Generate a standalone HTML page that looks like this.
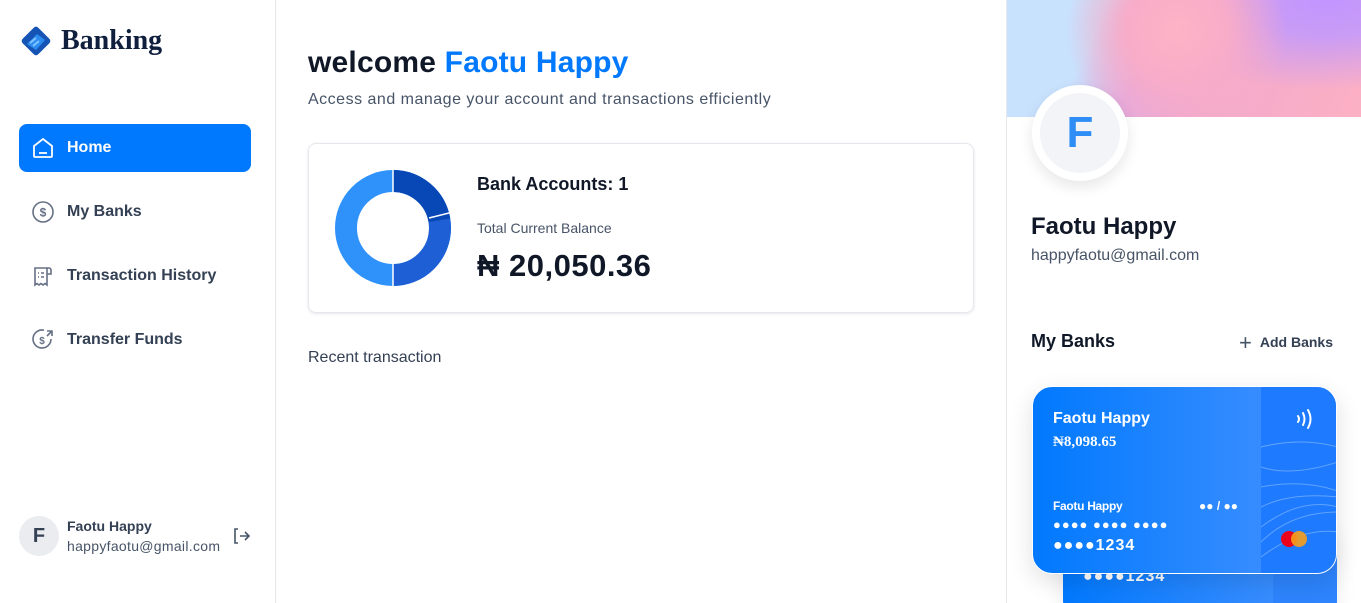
<!DOCTYPE html>
<html><head><style>
*{box-sizing:border-box;margin:0;padding:0}
html,body{width:1361px;height:603px;overflow:hidden}
body{font-family:"Liberation Sans",sans-serif;background:#fff;position:relative;color:#101828}
.side{position:absolute;left:0;top:0;width:276px;height:603px;border-right:1px solid #e5e7eb}
.logo{position:absolute;left:19px;top:24px;display:flex;align-items:center}
.logo span{font-family:"Liberation Serif",serif;font-weight:bold;font-size:28px;color:#0f1f3d;margin-left:8px}
.nav{position:absolute;left:19px;width:232px;height:48px;border-radius:8px;display:flex;align-items:center;padding-left:12px;font-weight:bold;font-size:16px;color:#344054}
.nav svg{margin-right:12px}
.nav.act{background:#0179fe;color:#fff}
.main{position:absolute;left:276px;top:0;width:730px;height:603px}
.right{position:absolute;left:1006px;top:0;width:355px;height:603px;border-left:1px solid #e5e7eb;overflow:hidden}
.card{position:absolute;border-radius:20px;overflow:hidden;background:linear-gradient(90deg,#0179fe,#4893ff);color:#fff}
</style></head><body>
<div class="side">
 <div class="logo"><svg width="34" height="34" viewBox="0 0 34 34"><rect x="6" y="6" width="22" height="22" transform="rotate(45 17 17)" rx="3" fill="#1553b5"/><path d="M8 20 L18 10 L26 16 L17 26Z" fill="#2c8cf0"/><path d="M11 19l6-5M14 22l6-5" stroke="#7fc4ff" stroke-width="2"/></svg><span>Banking</span></div>
 <div class="nav act" style="top:124px"><svg width="24" height="24" viewBox="0 0 24 24" fill="none" stroke="#fff" stroke-width="1.8"><path d="M3 10 L12 3 L21 10 V20 a1 1 0 0 1-1 1 H4 a1 1 0 0 1-1-1Z"/><path d="M8 17h8"/></svg>Home</div>
 <div class="nav" style="top:188px"><svg width="24" height="24" viewBox="0 0 24 24" fill="none" stroke="#667085" stroke-width="1.6"><circle cx="12" cy="12" r="10"/><text x="12" y="16.5" font-size="12" text-anchor="middle" fill="#667085" stroke="none" font-family="Liberation Sans">$</text></svg>My Banks</div>
 <div class="nav" style="top:252px"><svg width="24" height="24" viewBox="0 0 24 24" fill="none" stroke="#667085" stroke-width="1.6"><path d="M16 4H4v17l2-1.5 2 1.5 2-1.5 2 1.5 2-1.5 2 1.5V4"/><path d="M16 4h2a2 2 0 0 1 2 2v4h-4"/><path d="M7 9h1M10 9h3M7 13h1M10 13h3"/></svg>Transaction History</div>
 <div class="nav" style="top:316px"><svg width="24" height="24" viewBox="0 0 24 24" fill="none" stroke="#667085" stroke-width="1.6"><path d="M20 11a9 9 0 1 1-7-8.8"/><path d="M16 3h5v5M21 3l-5 5"/><text x="11" y="16" font-size="10" text-anchor="middle" fill="#667085" stroke="none" font-family="Liberation Sans" font-weight="bold">$</text></svg>Transfer Funds</div>
 <div style="position:absolute;left:19px;top:516px;width:40px;height:40px;border-radius:50%;background:#eaecf0;color:#344054;font-weight:bold;font-size:20px;display:flex;align-items:center;justify-content:center">F</div>
 <div style="position:absolute;left:67px;top:518px;font-size:14px;font-weight:bold;color:#344054">Faotu Happy</div>
 <div style="position:absolute;left:67px;top:538px;font-size:14px;color:#475467;letter-spacing:.3px">happyfaotu@gmail.com</div>
 <svg style="position:absolute;left:231px;top:526px" width="20" height="20" viewBox="0 0 20 20" fill="none" stroke="#475467" stroke-width="1.6"><path d="M7 3H4v14h3M9 10h9M14 6l4 4-4 4"/></svg>
</div>
<div class="main">
 <div style="position:absolute;left:32px;top:46px;font-size:30px;font-weight:600;color:#101828;letter-spacing:.2px">welcome <span style="color:#0179fe">Faotu Happy</span></div>
 <div style="position:absolute;left:32px;top:91px;font-size:16px;color:#475467;letter-spacing:.5px">Access and manage your account and transactions efficiently</div>
 <div style="position:absolute;left:32px;top:143px;width:666px;height:170px;border:1px solid #e4e7ec;border-radius:8px;box-shadow:0 1px 3px rgba(16,24,40,.1)">
  <svg style="position:absolute;left:25px;top:25px" width="118" height="118" viewBox="-59 -59 118 118">
   <g fill="none" stroke-width="22">
   <circle r="47" stroke="#2f91fa"/>
   <circle r="47" stroke="#1e5fd6" stroke-dasharray="147 400" transform="rotate(-90)"/>
   <circle r="47" stroke="#0747b6" stroke-dasharray="66 400" transform="rotate(-90)"/>
   </g>
   <g stroke="#fff" stroke-width="1.5"><line x1="0" y1="-60" x2="0" y2="-35"/><line x1="0" y1="60" x2="0" y2="35"/><line x1="36" y1="-10" x2="60" y2="-16"/></g>
  </svg>
  <div style="position:absolute;left:168px;top:30px;font-size:18px;font-weight:600;color:#101828">Bank Accounts: 1</div>
  <div style="position:absolute;left:168px;top:76px;font-size:14px;color:#475467">Total Current Balance</div>
  <div style="position:absolute;left:168px;top:104px;font-size:31px;font-weight:600;color:#101828;letter-spacing:.5px">₦ 20,050.36</div>
 </div>
 <div style="position:absolute;left:32px;top:349px;font-size:16px;color:#344054">Recent transaction</div>
</div>
<div class="right">
 <div style="position:absolute;left:0;top:0;width:355px;height:117px;background:radial-gradient(circle at 170px 30px,#ffb3c6 0,#f8acc8 50px,rgba(246,168,200,0) 110px),radial-gradient(ellipse 200px 90px at 320px 0px,#c195ff 0,#c99cf5 40%,rgba(193,149,255,0) 100%),linear-gradient(115deg,#c8e1fd 0,#c8e1fd 25%,#e0a8e0 40%,#f2aacc 60%,#fdb0c4 100%)"></div>
 <div style="position:absolute;left:25px;top:85px;width:96px;height:96px;border-radius:50%;background:#fff;box-shadow:0 6px 14px rgba(16,24,40,.1);display:flex;align-items:center;justify-content:center"><div style="width:80px;height:80px;border-radius:50%;background:#f2f4f7;color:#2e8ef6;font-weight:bold;font-size:44px;display:flex;align-items:center;justify-content:center">F</div></div>
 <div style="position:absolute;left:24px;top:213px;font-size:24px;font-weight:600;color:#101828">Faotu Happy</div>
 <div style="position:absolute;left:24px;top:247px;font-size:16px;color:#475467">happyfaotu@gmail.com</div>
 <div style="position:absolute;left:24px;top:331px;font-size:18px;font-weight:600;color:#101828">My Banks</div>
 <div style="position:absolute;left:232px;top:330px;font-size:14px;font-weight:bold;color:#344054"><span style="font-size:22px;font-weight:normal;vertical-align:-3px;margin-right:8px;color:#475467">+</span>Add Banks</div>
 <div class="card" style="left:56px;top:520px;width:274px;height:100px;box-shadow:0 8px 20px rgba(0,0,0,.08)">
  <div style="position:absolute;left:20px;top:48px;font-size:16px;font-weight:bold;letter-spacing:1px">●●●●1234</div>
  <div style="position:absolute;left:210px;top:0;width:64px;height:100px;background:#2d84fc"></div>
 </div>
 <div class="card" style="left:25px;top:386px;width:305px;height:188px;box-shadow:0 8px 24px rgba(0,0,0,.12);border:1px solid #fff">
  <div style="position:absolute;left:228px;top:0;width:77px;height:188px;background:#1e7bff">
   <svg width="77" height="188" style="position:absolute;left:0;top:0" fill="none" stroke="rgba(255,255,255,.3)" stroke-width="1"><path d="M0 60 q40-10 77 0M0 80q30 10 77-5M0 100q40-8 77 4M0 120q30-15 77-10M0 140q40-30 77-20M0 155q30-30 77-30M0 170q40-30 77-25"/></svg>
   <svg style="position:absolute;left:34px;top:20px" width="22" height="24" viewBox="0 0 22 24" fill="none" stroke="#fff" stroke-width="2" stroke-linecap="round"><path d="M3 9q2 3 0 6M8 6q3 6 0 12M13 3q5 9 0 18"/></svg>
   <svg style="position:absolute;left:18px;top:142px" width="32" height="20"><circle cx="10" cy="10" r="8" fill="#eb001b"/><circle cx="20" cy="10" r="8" fill="#f79e1b" opacity=".9"/></svg>
  </div>
  <div style="position:absolute;left:20px;top:23px;font-size:16px;font-weight:bold">Faotu Happy</div>
  <div style="position:absolute;left:20px;top:47px;font-size:15px;font-weight:bold;font-family:'Liberation Serif',serif">₦8,098.65</div>
  <div style="position:absolute;left:20px;top:112px;font-size:12px;font-weight:bold;letter-spacing:-.3px">Faotu Happy</div>
  <div style="position:absolute;left:166px;top:112px;font-size:12px;font-weight:bold">●● / ●●</div>
  <div style="position:absolute;left:20px;top:130px;font-size:13px;font-weight:bold;letter-spacing:1px">●●●● ●●●● ●●●●</div>
  <div style="position:absolute;left:20px;top:150px;font-size:16px;font-weight:bold;letter-spacing:1px">●●●●1234</div>
 </div>
</div>
</body></html>
